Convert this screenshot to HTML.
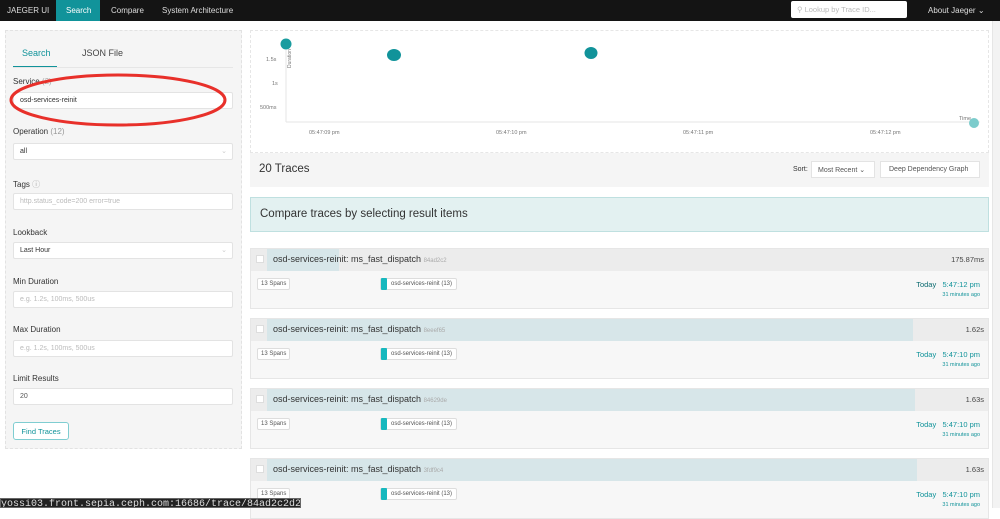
<!DOCTYPE html><html><head><style>
*{box-sizing:border-box;margin:0;padding:0}
body{width:1000px;height:508px;overflow:hidden;background:#fff;font-family:"Liberation Sans",sans-serif;position:relative}
.a{position:absolute}
.nav{left:0;top:0;width:1000px;height:21px;background:#141414;color:#ddd;font-size:8px}
.lbl{font-size:8px;color:#333;left:13px}
.inp{left:13px;width:220px;height:17px;background:#fff;border:1px solid #e3e3e3;border-radius:2px;font-size:7px;color:#333;padding:4px 6px}
.ph{color:#bbb}
.chev{position:absolute;right:5px;top:3px;color:#ccc;font-size:7px}
.card{left:250px;width:739px;height:61px;border:1px solid #e6e6e6;background:#f7f7f7}
.hd{position:absolute;left:0;top:0;width:100%;height:22px;background:#ececec}
.fill{position:absolute;left:16px;top:0;height:22px;background:#d7e6e9}
.cb{position:absolute;left:5px;top:6px;width:8px;height:8px;background:#fff;border:1px solid #ddd}
.tt{position:absolute;left:22px;top:5px;font-size:9px;color:#333}
.tt span{font-size:6px;color:#aaa}
.dur{position:absolute;right:4px;top:6px;font-size:7.5px;color:#444}
.sp{position:absolute;left:6px;top:29px;font-size:6px;color:#555;border:1px solid #ddd;background:#fff;padding:2px 3px;border-radius:2px}
.sv{position:absolute;left:129px;top:29px;font-size:6px;color:#555;border:1px solid #ddd;background:#fff;padding:2px 4px 2px 10px;border-radius:2px}
.sv:before{content:"";position:absolute;left:0;top:-1px;width:6px;height:12px;background:#17b8be;border-radius:1px}
.tm{position:absolute;right:8px;top:31px;font-size:7.5px;color:#11939a}
.ago{position:absolute;right:8px;top:43px;font-size:5.5px;color:#11939a}
</style></head><body>
<div class="a nav">
<div class="a" style="left:7px;top:6px">JAEGER UI</div>
<div class="a" style="left:56px;top:0;width:44px;height:21px;background:#11939a;color:#fff;padding:6px 10px">Search</div>
<div class="a" style="left:111px;top:6px">Compare</div>
<div class="a" style="left:162px;top:6px">System Architecture</div>
<div class="a" style="left:791px;top:1px;width:116px;height:17px;background:#fff;border-radius:2px;color:#bbb;padding:4px 6px;font-size:7.5px">&#9906; Lookup by Trace ID...</div>
<div class="a" style="left:928px;top:6px">About Jaeger ⌄</div>
</div>
<div class="a" style="left:5px;top:30px;width:237px;height:419px;background:#f5f5f5;border:1px dashed #e2e2e2"></div>
<div class="a" style="left:22px;top:48px;font-size:9px;color:#11939a">Search</div>
<div class="a" style="left:82px;top:48px;font-size:9px;color:#444">JSON File</div>
<div class="a" style="left:13px;top:66px;width:44px;height:2px;background:#11939a"></div>
<div class="a" style="left:13px;top:67px;width:220px;height:1px;background:#e6e6e6"></div>
<div class="a lbl" style="top:77px">Service <span style="color:#aaa">(2)</span></div>
<div class="a inp" style="top:92px">osd-services-reinit<span class="chev">⌄</span></div>
<div class="a lbl" style="top:127px">Operation <span style="color:#999">(12)</span></div>
<div class="a inp" style="top:143px">all<span class="chev">⌄</span></div>
<div class="a lbl" style="top:179px">Tags <span style="color:#aaa">ⓘ</span></div>
<div class="a inp ph" style="top:193px">http.status_code=200 error=true</div>
<div class="a lbl" style="top:228px">Lookback</div>
<div class="a inp" style="top:242px">Last Hour<span class="chev">⌄</span></div>
<div class="a lbl" style="top:277px">Min Duration</div>
<div class="a inp ph" style="top:291px">e.g. 1.2s, 100ms, 500us</div>
<div class="a lbl" style="top:325px">Max Duration</div>
<div class="a inp ph" style="top:340px">e.g. 1.2s, 100ms, 500us</div>
<div class="a lbl" style="top:374px">Limit Results</div>
<div class="a inp" style="top:388px;color:#555">20</div>
<div class="a" style="left:13px;top:422px;width:56px;height:18px;border:1px solid #7fcdd1;border-radius:3px;background:#fff;color:#11939a;font-size:7.5px;padding:4px 0;text-align:center">Find Traces</div>
<svg class="a" style="left:5px;top:70px" width="230" height="60"><ellipse cx="113" cy="30" rx="107" ry="25" fill="none" stroke="#e8302a" stroke-width="3"/></svg>
<div class="a" style="left:250px;top:30px;width:739px;height:123px;border:1px dashed #e6e6e6;background:#fff"></div>
<svg class="a" style="left:250px;top:30px" width="750" height="123" font-family="Liberation Sans" font-size="5.5" fill="#777">
<line x1="36" y1="20" x2="36" y2="92" stroke="#e6e6e6"/><line x1="36" y1="92" x2="730" y2="92" stroke="#e6e6e6"/>
<text x="16" y="31">1.5s</text><text x="22" y="55">1s</text><text x="10" y="79">500ms</text>
<text x="41" y="38" transform="rotate(-90 41 38)" font-size="5">Duration</text>
<text x="59" y="104">05:47:09 pm</text><text x="246" y="104">05:47:10 pm</text><text x="433" y="104">05:47:11 pm</text><text x="620" y="104">05:47:12 pm</text>
<text x="709" y="90">Time</text>
<circle cx="36" cy="14" r="5.5" fill="#1a9c9f"/><ellipse cx="144" cy="25" rx="7" ry="6" fill="#11939a"/><ellipse cx="341" cy="23" rx="6.5" ry="6" fill="#11939a"/><circle cx="724" cy="93" r="5" fill="#7ccccc"/>
</svg>
<div class="a" style="left:250px;top:153px;width:739px;height:34px;background:#f5f5f5"></div>
<div class="a" style="left:259px;top:163px;font-size:11.5px;color:#333">20 Traces</div>
<div class="a" style="left:793px;top:166px;font-size:7px;color:#333">Sort:</div>
<div class="a" style="left:811px;top:161px;width:64px;height:17px;background:#fff;border:1px solid #e3e3e3;font-size:7px;color:#555;padding:4px 6px">Most Recent ⌄</div>
<div class="a" style="left:880px;top:161px;width:100px;height:17px;background:#fff;border:1px solid #e3e3e3;font-size:7px;color:#555;padding:4px 8px">Deep Dependency Graph</div>
<div class="a" style="left:250px;top:197px;width:739px;height:35px;background:#e3f1f1;border:1px solid #bfe0e0;font-size:11.5px;color:#333;padding:10px 9px">Compare traces by selecting result items</div>

<div class="a card" style="top:248px"><div class="hd"></div><div class="fill" style="width:72px"></div><div class="cb"></div><div class="tt">osd-services-reinit: ms_fast_dispatch <span>84ad2c2</span></div><div class="dur">175.87ms</div><div class="sp">13 Spans</div><div class="sv">osd-services-reinit (13)</div><div class="tm"><span style="color:#0c6b70">Today</span> &nbsp; 5:47:12 pm</div><div class="ago">31 minutes ago</div></div>
<div class="a card" style="top:318px"><div class="hd"></div><div class="fill" style="width:646px"></div><div class="cb"></div><div class="tt">osd-services-reinit: ms_fast_dispatch <span>8eeef65</span></div><div class="dur">1.62s</div><div class="sp">13 Spans</div><div class="sv">osd-services-reinit (13)</div><div class="tm">Today &nbsp; 5:47:10 pm</div><div class="ago">31 minutes ago</div></div>
<div class="a card" style="top:388px"><div class="hd"></div><div class="fill" style="width:648px"></div><div class="cb"></div><div class="tt">osd-services-reinit: ms_fast_dispatch <span>84629de</span></div><div class="dur">1.63s</div><div class="sp">13 Spans</div><div class="sv">osd-services-reinit (13)</div><div class="tm">Today &nbsp; 5:47:10 pm</div><div class="ago">31 minutes ago</div></div>
<div class="a card" style="top:458px"><div class="hd"></div><div class="fill" style="width:650px"></div><div class="cb"></div><div class="tt">osd-services-reinit: ms_fast_dispatch <span>3fdf9c4</span></div><div class="dur">1.63s</div><div class="sp">13 Spans</div><div class="sv">osd-services-reinit (13)</div><div class="tm">Today &nbsp; 5:47:10 pm</div><div class="ago">31 minutes ago</div></div>
<div class="a" style="left:992px;top:21px;width:8px;height:487px;background:#f3f3f3;border-left:1px solid #e6e6e6"></div>
<div class="a" style="left:0;top:498px;width:301px;height:10px;background:#222;border:1px solid #666;color:#ddd;font-family:'Liberation Mono',monospace;font-size:10px;line-height:12px;white-space:nowrap;overflow:hidden">yossi03.front.sepia.ceph.com:16686/trace/84ad2c2d247bf683</div>
</body></html>
